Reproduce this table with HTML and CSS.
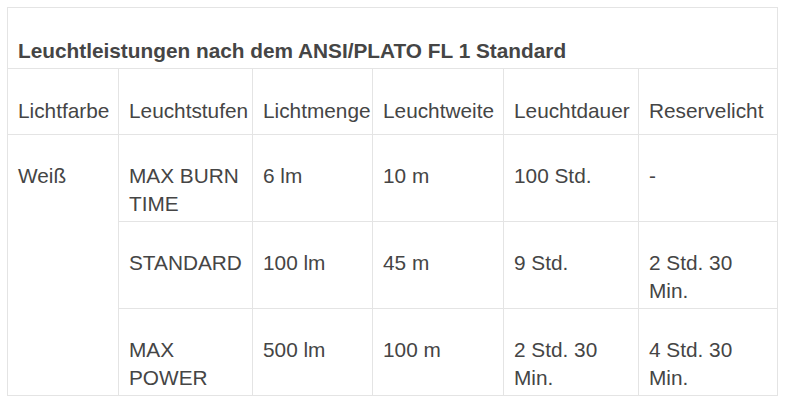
FILE: index.html
```html
<!DOCTYPE html>
<html lang="de">
<head>
<meta charset="utf-8">
<title>Leuchtleistungen</title>
<link rel="stylesheet" href="styles.css">
</head>
<body>
<table class="spec">
  <colgroup>
    <col class="c1"><col class="c2"><col class="c3"><col class="c4"><col class="c5"><col class="c6">
  </colgroup>
  <thead>
    <tr class="title-row"><th colspan="6">Leuchtleistungen nach dem ANSI/PLATO FL 1 Standard</th></tr>
    <tr class="head-row">
      <td>Lichtfarbe</td><td>Leuchtstufen</td><td>Lichtmenge</td><td>Leuchtweite</td><td>Leuchtdauer</td><td>Reservelicht</td>
    </tr>
  </thead>
  <tbody>
    <tr>
      <td rowspan="3">Weiß</td><td>MAX BURN TIME</td><td>6 lm</td><td>10 m</td><td>100 Std.</td><td>-</td>
    </tr>
    <tr>
      <td>STANDARD</td><td>100 lm</td><td>45 m</td><td>9 Std.</td><td>2 Std. 30 Min.</td>
    </tr>
    <tr>
      <td>MAX POWER</td><td>500 lm</td><td>100 m</td><td>2 Std. 30 Min.</td><td>4 Std. 30 Min.</td>
    </tr>
  </tbody>
</table>
</body>
</html>
```
FILE: styles.css
```css
html, body {
  background: #ffffff;
}
body {
  margin: 7px 0 0 7px;
  font-family: "Liberation Sans", Arial, sans-serif;
  font-size: 20.8px;
  line-height: 28px;
  color: #454545;
}
.spec {
  border-collapse: collapse;
  table-layout: fixed;
  width: 770px;
}
.c1 { width: 111px; }
.c2 { width: 134px; }
.c3 { width: 120px; }
.c4 { width: 131px; }
.c5 { width: 135px; }
.c6 { width: 139px; }
.spec th,
.spec td {
  border: 1px solid #e4e4e4;
  padding: 27px 2px 3px 10px;
  text-align: left;
  vertical-align: top;
  font-weight: normal;
}
.spec tbody tr {
  height: 87px;
}
.title-row th {
  font-weight: bold;
  padding-top: 29px;
  padding-bottom: 3px;
}
.head-row td {
  padding-top: 28px;
  padding-bottom: 9px;
  white-space: nowrap;
}
```
